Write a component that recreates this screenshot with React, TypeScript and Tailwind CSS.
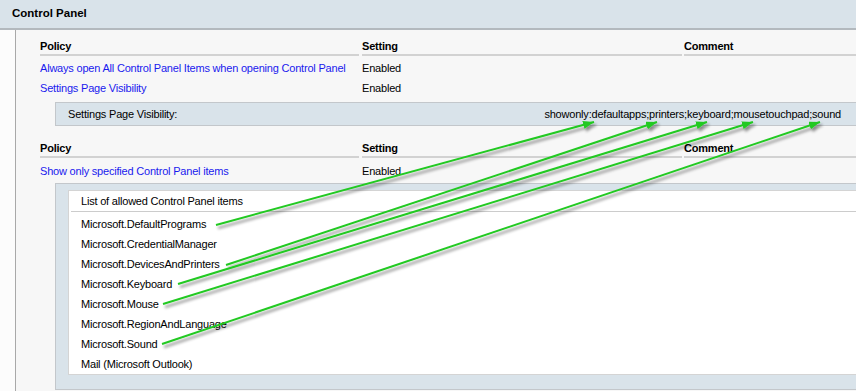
import React from "react";

// Group Policy report fragment: Control Panel settings with green callout arrows
const topRows = [
  { policy: "Always open All Control Panel Items when opening Control Panel", setting: "Enabled" },
  { policy: "Settings Page Visibility", setting: "Enabled" },
];

const allowedItems = [
  "Microsoft.DefaultPrograms",
  "Microsoft.CredentialManager",
  "Microsoft.DevicesAndPrinters",
  "Microsoft.Keyboard",
  "Microsoft.Mouse",
  "Microsoft.RegionAndLanguage",
  "Microsoft.Sound",
  "Mail (Microsoft Outlook)",
];

// start (end of list item) -> tip (under the matching word in the value)
const arrows = [
  [216, 225, 594, 122],
  [226, 265, 657, 122],
  [178, 284, 707, 122],
  [163, 304, 753, 122],
  [162, 344, 820, 122],
];

function HeaderRow() {
  return (
    <div className="flex h-[20px] font-bold">
      <div className="mr-[3px] flex w-[319px] items-center border-b-2 border-[#d2d2d2] pt-[2px]">Policy</div>
      <div className="mr-[2px] flex w-[320px] items-center border-b-2 border-[#d2d2d2] pt-[2px]">Setting</div>
      <div className="flex flex-1 items-center border-b-2 border-[#d2d2d2] pt-[2px]">Comment</div>
    </div>
  );
}

function PolicyRow({ policy, setting }: { policy: string; setting: string }) {
  return (
    <div className="flex h-[20px] items-center pt-[1px]">
      <div className="mr-[3px] w-[319px] text-[#1a1aee]">{policy}</div>
      <div className="w-[320px]">{setting}</div>
    </div>
  );
}

export default function App() {
  return (
    <div className="relative h-[391px] w-[856px] overflow-hidden bg-[#f7f7f7] font-['Liberation_Sans',Arial,sans-serif] text-[11px] tracking-[-0.2px] text-black">
      {/* Section title bar */}
      <div className="flex h-[30px] items-center border-b-2 border-[#b3b9be] bg-[#d9e3ea] pl-3 text-[11.5px] font-bold tracking-normal">
        Control Panel
      </div>

      <div className="flex">
        <div className="h-[361px] w-[16px] shrink-0 border-r border-[#a9a9a9] bg-[#fcfcfc]" />

        <div className="flex-1 pl-[24px] pt-[6px]">
          <HeaderRow />
          <div className="mt-[2px]">
            {topRows.map((r) => (
              <PolicyRow key={r.policy} {...r} />
            ))}
          </div>

          {/* Settings Page Visibility value */}
          <div className="ml-[15px] mt-[4px] flex h-[24px] items-center justify-between border-y border-l border-[#c3c7cb] bg-[#d9e3ea] pl-[12px] pr-[15px]">
            <span>Settings Page Visibility:</span>
            <span>showonly:defaultapps;printers;keyboard;mousetouchpad;sound</span>
          </div>

          <div className="mt-[12px]">
            <HeaderRow />
          </div>
          <div className="mt-[3px]">
            <PolicyRow policy="Show only specified Control Panel items" setting="Enabled" />
          </div>

          {/* Allowed items list */}
          <div className="ml-[15px] mt-[2px] border-y border-l border-[#c3c7cb] bg-[#d9e3ea] pb-[14px] pl-[12px] pt-[6px]">
            <div className="border-y border-l border-[#d4d4d4] bg-white">
              <div className="ml-[2px] flex h-[21px] items-center border-b border-[#cccccc] pl-[10px]">
                List of allowed Control Panel items
              </div>
              <div className="pt-[2px]">
                {allowedItems.map((item) => (
                  <div key={item} className="flex h-[20px] items-center pl-[12px]">
                    {item}
                  </div>
                ))}
              </div>
            </div>
          </div>
        </div>
      </div>

      {/* Callout arrows drawn over the report */}
      <svg className="pointer-events-none absolute inset-0" width="856" height="391" viewBox="0 0 856 391">
        <defs>
          <filter id="shadow" x="-10%" y="-10%" width="120%" height="130%">
            <feDropShadow dx="2" dy="3" stdDeviation="1.4" floodColor="#000" floodOpacity="0.45" />
          </filter>
          <marker id="head" markerUnits="userSpaceOnUse" markerWidth="12" markerHeight="10" refX="11" refY="4" orient="auto">
            <path d="M0 0 L11 4 L0 8 Z" fill="#22c922" />
          </marker>
        </defs>
        <g filter="url(#shadow)">
          {arrows.map(([x1, y1, x2, y2], i) => (
            <line key={i} x1={x1} y1={y1} x2={x2} y2={y2} stroke="#22c922" strokeWidth="2" markerEnd="url(#head)" />
          ))}
        </g>
      </svg>
    </div>
  );
}
